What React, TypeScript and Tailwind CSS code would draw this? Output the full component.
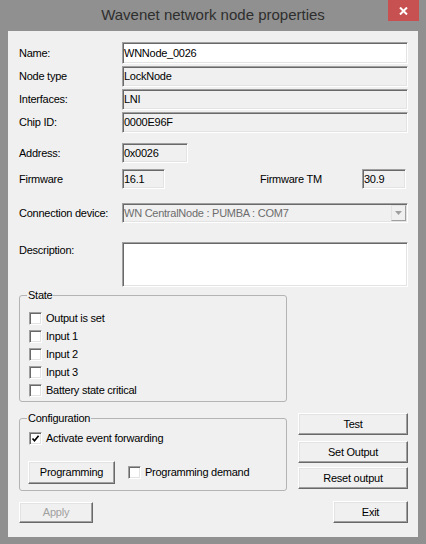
import type { ReactNode } from 'react'

const sunken =
  'border border-t-[#a0a0a0] border-l-[#a0a0a0] border-b-white border-r-white shadow-[inset_1px_1px_0_#696969,inset_-1px_-1px_0_#e3e3e3]'
const raised =
  'border border-t-white border-l-white border-b-[#696969] border-r-[#696969] shadow-[inset_-1px_-1px_0_#a0a0a0,inset_1px_1px_0_#e3e3e3]'

const Field = ({
  value,
  white,
  className = '',
}: {
  value?: string
  white?: boolean
  className?: string
}) => (
  <div
    className={`${sunken} flex items-center overflow-hidden whitespace-nowrap px-[1px] ${
      white ? 'bg-white' : 'bg-[#f0f0f0]'
    } ${className}`}
  >
    {value}
  </div>
)

const Btn = ({
  children,
  className = '',
  disabled,
}: {
  children: ReactNode
  className?: string
  disabled?: boolean
}) => (
  <button
    className={`${raised} flex items-center justify-center bg-[#f0f0f0] ${
      disabled ? 'text-[#a0a0a0]' : 'text-black'
    } ${className}`}
  >
    {children}
  </button>
)

const Check = ({ label, checked }: { label: string; checked?: boolean }) => (
  <div className="flex h-[18px] items-center gap-[4px]">
    <div
      className={`${sunken} flex h-[13px] w-[13px] shrink-0 items-center justify-center bg-white`}
    >
      {checked && (
        <svg width="9" height="9" viewBox="0 0 9 9">
          <polyline
            points="1.5,4.5 3.5,6.8 7.6,1.8"
            fill="none"
            stroke="#000"
            strokeWidth="1.7"
          />
        </svg>
      )}
    </div>
    <span>{label}</span>
  </div>
)

const Row = ({ label, children, className = '' }: { label: string; children: ReactNode; className?: string }) => (
  <div className={`flex items-center ${className}`}>
    <div className="w-[103px] shrink-0">{label}</div>
    {children}
  </div>
)

export default function App() {
  return (
    <div className="flex h-[544px] w-[426px] flex-col bg-[#909090] font-['Liberation_Sans',Arial,sans-serif]">
      <div className="relative flex h-[31px] shrink-0 items-center justify-center pb-[1px] text-[15px] text-[#2e2e2e]">
        Wavenet network node properties
        <div className="absolute right-[7px] top-0 flex h-[21px] w-[31px] items-center justify-center bg-[#c75050]">
          <svg width="9" height="8" viewBox="0 0 9 8">
            <path d="M1 0.5 L8 7.5 M8 0.5 L1 7.5" stroke="#fff" strokeWidth="2" />
          </svg>
        </div>
      </div>

      <div className="mx-[8px] flex h-[506px] flex-col bg-[#f0f0f0] pl-[11px] pr-[10px] pt-[11px] text-[11px] tracking-[-0.25px] text-black">
        <div className="flex flex-col gap-[2px]">
          <Row label="Name:" className="h-[22px]">
            <Field white value="WNNode_0026" className="h-full flex-1" />
          </Row>
          <Row label="Node type" className="h-[21px]">
            <Field value="LockNode" className="h-full flex-1" />
          </Row>
          <Row label="Interfaces:" className="h-[21px]">
            <Field value="LNI" className="h-full flex-1" />
          </Row>
          <Row label="Chip ID:" className="h-[21px]">
            <Field value="0000E96F" className="h-full flex-1" />
          </Row>
        </div>

        <Row label="Address:" className="mt-[10px] h-[20px]">
          <Field value="0x0026" className="h-full w-[66px]" />
        </Row>

        <Row label="Firmware" className="mt-[6px] h-[20px]">
          <Field value="16.1" className="h-full w-[43px]" />
          <div className="ml-[95px] w-[102px]">Firmware TM</div>
          <Field value="30.9" className="h-full w-[44px]" />
        </Row>

        <Row label="Connection device:" className="mt-[14px] h-[20px]">
          <div className={`${sunken} flex h-full flex-1 items-center bg-[#f0f0f0] pl-[1px]`}>
            <span className="flex-1 whitespace-nowrap text-[#6d6d6d]">
              WN CentralNode : PUMBA : COM7
            </span>
            <div className="mr-[1px] flex h-[16px] w-[15px] items-center justify-center border border-b-[#a0a0a0] border-l-[#e3e3e3] border-r-[#a0a0a0] border-t-[#e3e3e3] bg-[#f0f0f0]">
              <svg width="7" height="4" viewBox="0 0 7 4">
                <path d="M0 0 H7 L3.5 4 Z" fill="#a0a0a0" />
              </svg>
            </div>
          </div>
        </Row>

        <div className="mt-[19px] flex h-[45px]">
          <div className="w-[103px] shrink-0">Description:</div>
          <Field white className="h-full flex-1" />
        </div>

        <div className="mt-[2px] flex">
          <div className="flex w-[268px] flex-col">
            <fieldset className="h-[113px] rounded-[3px] border border-[#b4b4b4] px-[9px]">
              <legend className="-ml-[2px] px-[1px] leading-[13px]">State</legend>
              <div className="flex flex-col pt-[7px]">
                <Check label="Output is set" />
                <Check label="Input 1" />
                <Check label="Input 2" />
                <Check label="Input 3" />
                <Check label="Battery state critical" />
              </div>
            </fieldset>

            <fieldset className="mt-[10px] h-[79px] rounded-[3px] border border-[#b4b4b4] px-[9px]">
              <legend className="-ml-[2px] px-[1px] leading-[13px]">Configuration</legend>
              <div className="flex flex-col pt-[4px]">
                <Check label="Activate event forwarding" checked />
                <div className="mt-[14px] flex items-center">
                  <Btn className="-ml-[1px] h-[23px] w-[87px]">Programming</Btn>
                  <div className="ml-[13px]">
                    <Check label="Programming demand" />
                  </div>
                </div>
              </div>
            </fieldset>

            <Btn disabled className="mt-[11px] h-[21px] w-[74px]">
              Apply
            </Btn>
          </div>

          <div className="ml-auto flex w-[110px] flex-col justify-end">
            <Btn className="h-[22px] w-full">Test</Btn>
            <Btn className="mt-[6px] h-[22px] w-full">Set Output</Btn>
            <Btn className="mt-[4px] h-[22px] w-full">Reset output</Btn>
            <Btn className="mt-[12px] h-[22px] w-[75px] self-end">Exit</Btn>
          </div>
        </div>
      </div>
    </div>
  )
}
